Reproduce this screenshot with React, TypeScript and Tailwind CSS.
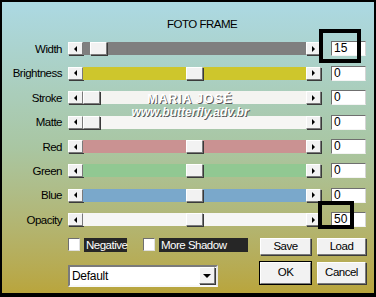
import React from 'react';

type Row = { label: string; track: string; thumb: string; value: string };

const rows: Row[] = [
  { label: 'Width', track: 'bg-[#7f7f7f]', thumb: 'ml-[7px]', value: '15' },
  { label: 'Brightness', track: 'bg-[#cec62c]', thumb: 'ml-[103px]', value: '0' },
  { label: 'Stroke', track: 'bg-[#f4f4f1]', thumb: 'ml-0', value: '0' },
  { label: 'Matte', track: 'bg-[#f6f6f4]', thumb: 'ml-0', value: '0' },
  { label: 'Red', track: 'bg-[#ca9292]', thumb: 'ml-[103px]', value: '0' },
  { label: 'Green', track: 'bg-[#91c892]', thumb: 'ml-[103px]', value: '0' },
  { label: 'Blue', track: 'bg-[#7aa8cb]', thumb: 'ml-[103px]', value: '0' },
  { label: 'Opacity', track: 'bg-[#f6f6f4]', thumb: 'ml-[103px]', value: '50' },
];

const raised =
  'bg-[#f2f2f2] border border-t-white border-l-white border-r-[#7a7a7a] border-b-[#7a7a7a] shadow-[1px_1px_0_#3a3a3a]';
const sunken = 'bg-white border border-t-[#6f6f6f] border-l-[#6f6f6f] border-r-[#d4d4d4] border-b-[#f4f4f4]';

function Arrow({ dir }: { dir: 'left' | 'right' }) {
  return (
    <div className={`flex h-full w-[15px] shrink-0 items-center justify-center ${raised}`}>
      {dir === 'left' ? (
        <div className="h-0 w-0 border-y-[3px] border-r-[3px] border-y-transparent border-r-black" />
      ) : (
        <div className="h-0 w-0 border-y-[3px] border-l-[3px] border-y-transparent border-l-black" />
      )}
    </div>
  );
}

function Button({ label, width, tall, primary }: { label: string; width: string; tall?: boolean; primary?: boolean }) {
  return (
    <div
      className={`flex items-center justify-center ${width} ${tall ? 'h-[22px]' : 'h-[17px]'} ${raised} ${
        primary ? 'outline outline-1 outline-black' : ''
      }`}
    >
      {label}
    </div>
  );
}

export default function App() {
  return (
    <div className="relative h-[297px] w-[376px] overflow-hidden border-x-2 border-t-2 border-b-4 border-black bg-linear-to-b from-[#acd9e3] via-[#a9c6a2] to-[#b9a53c] font-['Liberation_Sans',Arial,sans-serif] text-[11.5px] tracking-[-0.5px] text-black">
      {/* Title */}
      <div className="h-[34.8px] pt-[15px] pl-[165px] leading-[14px]">FOTO FRAME</div>

      {/* Slider rows */}
      {rows.map((r) => (
        <div key={r.label} className="flex h-[24.4px] items-center">
          <div className="w-[60px] text-right leading-[14px]">{r.label}</div>
          <div className="ml-[6px] flex h-[13px] w-[253px]">
            <Arrow dir="left" />
            <div className={`flex flex-1 ${r.track}`}>
              <div className={`h-full w-[17px] shrink-0 ${r.thumb} ${raised}`} />
            </div>
            <Arrow dir="right" />
          </div>
          <div className={`ml-[10px] h-[15px] w-[35px] pl-[2px] text-[12px] leading-[13px] tracking-normal ${sunken}`}>
            {r.value}
          </div>
        </div>
      ))}

      {/* Checkboxes + Save / Load */}
      <div className="mt-[6px] flex h-[17px] items-start">
        <div className="ml-[66px] h-[13px] w-[12px] shrink-0 border border-t-[#6f6f6f] border-l-[#6f6f6f] border-r-[#e0e0e0] border-b-[#e0e0e0] bg-white" />
        <div className="ml-[4px] h-[14px] w-[43px] bg-[#262626] pl-[2px] leading-[14px] text-white">Negative</div>
        <div className="ml-[16px] h-[13px] w-[12px] shrink-0 border border-t-[#6f6f6f] border-l-[#6f6f6f] border-r-[#e0e0e0] border-b-[#e0e0e0] bg-white" />
        <div className="ml-[4px] h-[14px] w-[89px] bg-[#262626] pl-[2px] leading-[14px] text-white">More Shadow</div>
        <div className="ml-[12px]">
          <Button label="Save" width="w-[51px]" />
        </div>
        <div className="ml-[6px]">
          <Button label="Load" width="w-[49px]" />
        </div>
      </div>

      {/* Preset dropdown + OK / Cancel */}
      <div className="mt-[7px] flex items-start">
        <div className="mt-[3px] ml-[66px] flex h-[22px] w-[150px] items-center justify-between border-2 border-t-[#7a7a7a] border-l-[#7a7a7a] border-r-[#e8e8e8] border-b-[#f8f8f8] bg-white">
          <span className="pl-[2px] text-[12px] tracking-[-0.3px]">Default</span>
          <div className={`mr-[1px] flex h-[17px] w-[16px] items-center justify-center ${raised}`}>
            <div className="h-0 w-0 border-x-[4px] border-t-[4px] border-x-transparent border-t-black" />
          </div>
        </div>
        <div className="ml-[42px]">
          <Button label="OK" width="w-[51px]" tall primary />
        </div>
        <div className="ml-[6px]">
          <Button label="Cancel" width="w-[49px]" tall />
        </div>
      </div>

      {/* Watermark */}
      <div className="pointer-events-none absolute top-[91px] left-[126px] w-[124px] text-center text-white">
        <div className="text-[12.5px] leading-[13px] font-bold tracking-[0.8px] [text-shadow:1px_1px_0_#5a5a5a]">
          MARIA JOSÉ
        </div>
        <div className="text-[12px] leading-[13px] font-bold tracking-normal italic [text-shadow:1px_1px_0_#5a5a5a]">
          www.butterfly.adv.br
        </div>
      </div>

      {/* Highlight frames */}
      <div className="pointer-events-none absolute top-[27px] left-[317px] h-[34px] w-[42px] border-4 border-black" />
      <div className="pointer-events-none absolute top-[199px] left-[316px] h-[28px] w-[36px] border-4 border-black" />
    </div>
  );
}
